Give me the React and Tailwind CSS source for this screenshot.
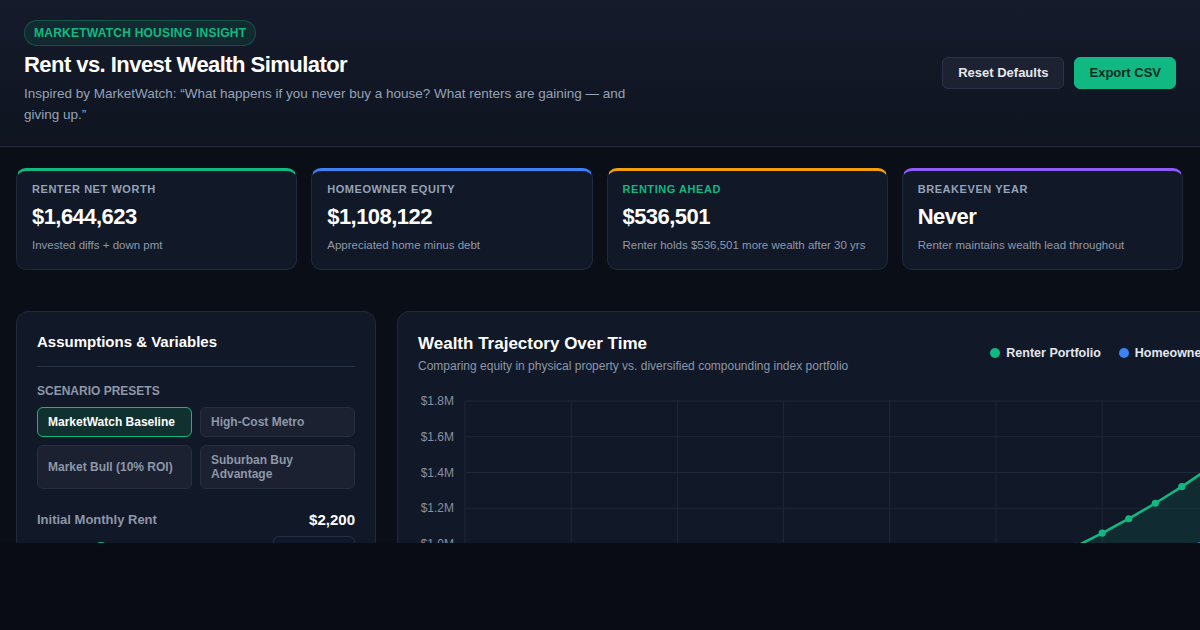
import React from 'react';

const stats = [
  { label: 'Renter Net Worth', value: '$1,644,623', note: 'Invested diffs + down pmt', bar: 'border-t-[#10b981]', labelColor: 'text-[#94a3b8]' },
  { label: 'Homeowner Equity', value: '$1,108,122', note: 'Appreciated home minus debt', bar: 'border-t-[#3b82f6]', labelColor: 'text-[#94a3b8]' },
  { label: 'Renting Ahead', value: '$536,501', note: 'Renter holds $536,501 more wealth after 30 yrs', bar: 'border-t-[#f59e0b]', labelColor: 'text-[#10b981]' },
  { label: 'Breakeven Year', value: 'Never', note: 'Renter maintains wealth lead throughout', bar: 'border-t-[#8b5cf6]', labelColor: 'text-[#94a3b8]' },
];

const presets = [
  { name: 'MarketWatch Baseline', active: true },
  { name: 'High-Cost Metro' },
  { name: 'Market Bull (10% ROI)' },
  { name: 'Suburban Buy Advantage' },
];

// chart geometry (svg coords)
const X0 = 47;
const PER_YEAR = 26.55;
const yOf = (m) => 10 + (1.8 - m) * 178.75;
const xOf = (n) => X0 + n * PER_YEAR;

const years = Array.from({ length: 31 }, (_, n) => n);
const renter = years.map((n) => 1.644623 / Math.pow(1.0758, 30 - n));
const owner = years.map((n) => 0.09 + 1.018122 * Math.pow(n / 30, 1.35));

function linePath(data) {
  return data.map((v, n) => `${n === 0 ? 'M' : 'L'}${xOf(n).toFixed(1)},${yOf(v).toFixed(1)}`).join(' ');
}
function areaPath(data) {
  return `${linePath(data)} L${xOf(30).toFixed(1)},${yOf(0).toFixed(1)} L${xOf(0)},${yOf(0).toFixed(1)} Z`;
}

function WealthChart() {
  const ticks = [1.8, 1.6, 1.4, 1.2, 1.0, 0.8, 0.6, 0.4, 0.2, 0];
  return (
    <svg width="850" height="360" className="block">
      {ticks.map((t) => (
        <g key={t}>
          <line x1={X0} x2={X0 + 30 * PER_YEAR} y1={yOf(t)} y2={yOf(t)} stroke="#212938" strokeWidth="1" />
          <text x="36" y={yOf(t) + 4} textAnchor="end" fontSize="12" fill="#8590a2">
            ${t.toFixed(1)}M
          </text>
        </g>
      ))}
      {[0, 4, 8, 12, 16, 20, 24, 28].map((n) => (
        <line key={n} x1={xOf(n)} x2={xOf(n)} y1={yOf(1.8)} y2={yOf(0)} stroke="#212938" strokeWidth="1" />
      ))}
      <path d={areaPath(owner)} fill="rgba(59,130,246,0.10)" />
      <path d={linePath(owner)} fill="none" stroke="#3b82f6" strokeWidth="2.5" />
      <path d={areaPath(renter)} fill="rgba(16,185,129,0.12)" />
      <path d={linePath(renter)} fill="none" stroke="#10b981" strokeWidth="2.5" />
      {renter.map((v, n) => (
        <circle key={n} cx={xOf(n)} cy={yOf(v)} r="3.6" fill="#10b981" />
      ))}
      {owner.map((v, n) => (
        <circle key={n} cx={xOf(n)} cy={yOf(v)} r="3.6" fill="#3b82f6" />
      ))}
    </svg>
  );
}

export default function App() {
  return (
    <div className="min-h-screen bg-[#090c14] font-['Liberation_Sans',Arial,sans-serif]">
      <div className="h-[543px] overflow-hidden bg-[#0a0e17]">
        {/* Header */}
        <header className="flex items-center justify-between border-b border-[#222a39] bg-gradient-to-b from-[#151b2b] to-[#0f1420] px-6 pt-5 pb-[21px]">
          <div>
            <span className="inline-block rounded-full border border-[#10b981]/30 bg-[#10b981]/10 px-[9px] py-[4px] text-xs font-bold uppercase leading-4 tracking-[0.02em] text-[#10b981]">
              MarketWatch Housing Insight
            </span>
            <h1 className="mt-[5px] text-[22px] font-bold leading-7 tracking-tight text-white">
              Rent vs. Invest Wealth Simulator
            </h1>
            <p className="mt-1 max-w-[620px] text-[13.5px] leading-[21px] text-[#94a3b8]">
              Inspired by MarketWatch: “What happens if you never buy a house? What renters are gaining — and giving up.”
            </p>
          </div>
          <div className="flex items-center gap-2.5">
            <button className="rounded-md border border-[#2a3345] bg-[#1c2232] px-[15px] py-[6px] text-[13px] font-bold leading-[18px] text-[#e5e7eb]">
              Reset Defaults
            </button>
            <button className="rounded-md border border-[#10b981] bg-[#10b981] px-3.5 py-[6px] text-[13px] font-bold leading-[18px] text-[#062a1f]">
              Export CSV
            </button>
          </div>
        </header>

        {/* Stat cards */}
        <section className="grid grid-cols-4 gap-3.5 pl-4 pr-[17px] pt-[21px]">
          {stats.map((s) => (
            <div key={s.label} className={`rounded-[10px] border border-[#1f293a] border-t-[3px] ${s.bar} bg-[#111827] px-[15px] pt-[10px] pb-4`}>
              <div className={`text-[11px] font-bold uppercase leading-4 tracking-wider ${s.labelColor}`}>{s.label}</div>
              <div className="mt-1.5 text-[22px] font-bold leading-7 tracking-tight text-white">{s.value}</div>
              <div className="mt-1.5 text-[11.5px] leading-4 text-[#8f99aa]">{s.note}</div>
            </div>
          ))}
        </section>

        {/* Main */}
        <section className="flex gap-[21px] pl-4 pt-[41px]">
          <div className="w-[360px] shrink-0 rounded-xl border border-[#1f293a] bg-[#111827] p-5">
            <h2 className="border-b border-[#243044] pb-[14px] text-[15px] font-bold leading-5 text-white">
              Assumptions &amp; Variables
            </h2>
            <div className="mt-4 text-xs font-bold uppercase leading-4 text-[#8d97a8]">Scenario Presets</div>
            <div className="mt-2 grid grid-cols-2 gap-2">
              {presets.map((p) => (
                <button
                  key={p.name}
                  className={`rounded-md border px-2.5 py-[7px] text-left text-xs font-bold leading-[14px] ${
                    p.active
                      ? 'border-[#10b981] bg-[#10312f] text-white'
                      : 'border-[#262f40] bg-[#1b2130] text-[#8d97a8]'
                  }`}
                >
                  {p.name === 'Suburban Buy Advantage' ? (
                    <>
                      Suburban Buy
                      <br />
                      Advantage
                    </>
                  ) : (
                    p.name
                  )}
                </button>
              ))}
            </div>
            <div className="mt-[21px] flex items-center justify-between">
              <span className="text-[13px] font-bold leading-5 text-[#8d97a8]">Initial Monthly Rent</span>
              <span className="text-[15px] font-bold leading-5 text-white">$2,200</span>
            </div>
            <div className="mt-1.5 flex items-center gap-2.5">
              <div className="relative h-1.5 flex-1 rounded-full bg-[#263044]">
                <div className="h-1.5 w-[64px] rounded-full bg-[#10b981]" />
                <div className="absolute left-[56px] top-1/2 h-4 w-4 -translate-y-1/2 rounded-full bg-[#10b981]" />
              </div>
              <input
                readOnly
                value="2200"
                className="h-[28px] w-[82px] rounded-md border border-[#253048] bg-[#0f172a] px-2 text-[13px] text-white"
              />
            </div>
          </div>

          <div className="w-[890px] shrink-0 rounded-xl border border-[#1f293a] bg-[#111827] p-5">
            <div className="flex items-center">
              <div>
                <h2 className="text-[17px] font-bold leading-6 text-white">Wealth Trajectory Over Time</h2>
                <p className="mt-0.5 text-xs leading-4 text-[#8d97a8]">
                  Comparing equity in physical property vs. diversified compounding index portfolio
                </p>
              </div>
              <div className="ml-auto flex items-center gap-[18px] pr-[18px] text-[12.5px] font-bold text-[#e5e7eb]">
                <span className="flex items-center gap-1.5">
                  <span className="h-2.5 w-2.5 rounded-full bg-[#10b981]" />
                  Renter Portfolio
                </span>
                <span className="flex items-center gap-1.5">
                  <span className="h-2.5 w-2.5 rounded-full bg-[#3b82f6]" />
                  Homeowner Equity
                </span>
              </div>
            </div>
            <div className="mt-[17px]">
              <WealthChart />
            </div>
          </div>
        </section>
      </div>
    </div>
  );
}
